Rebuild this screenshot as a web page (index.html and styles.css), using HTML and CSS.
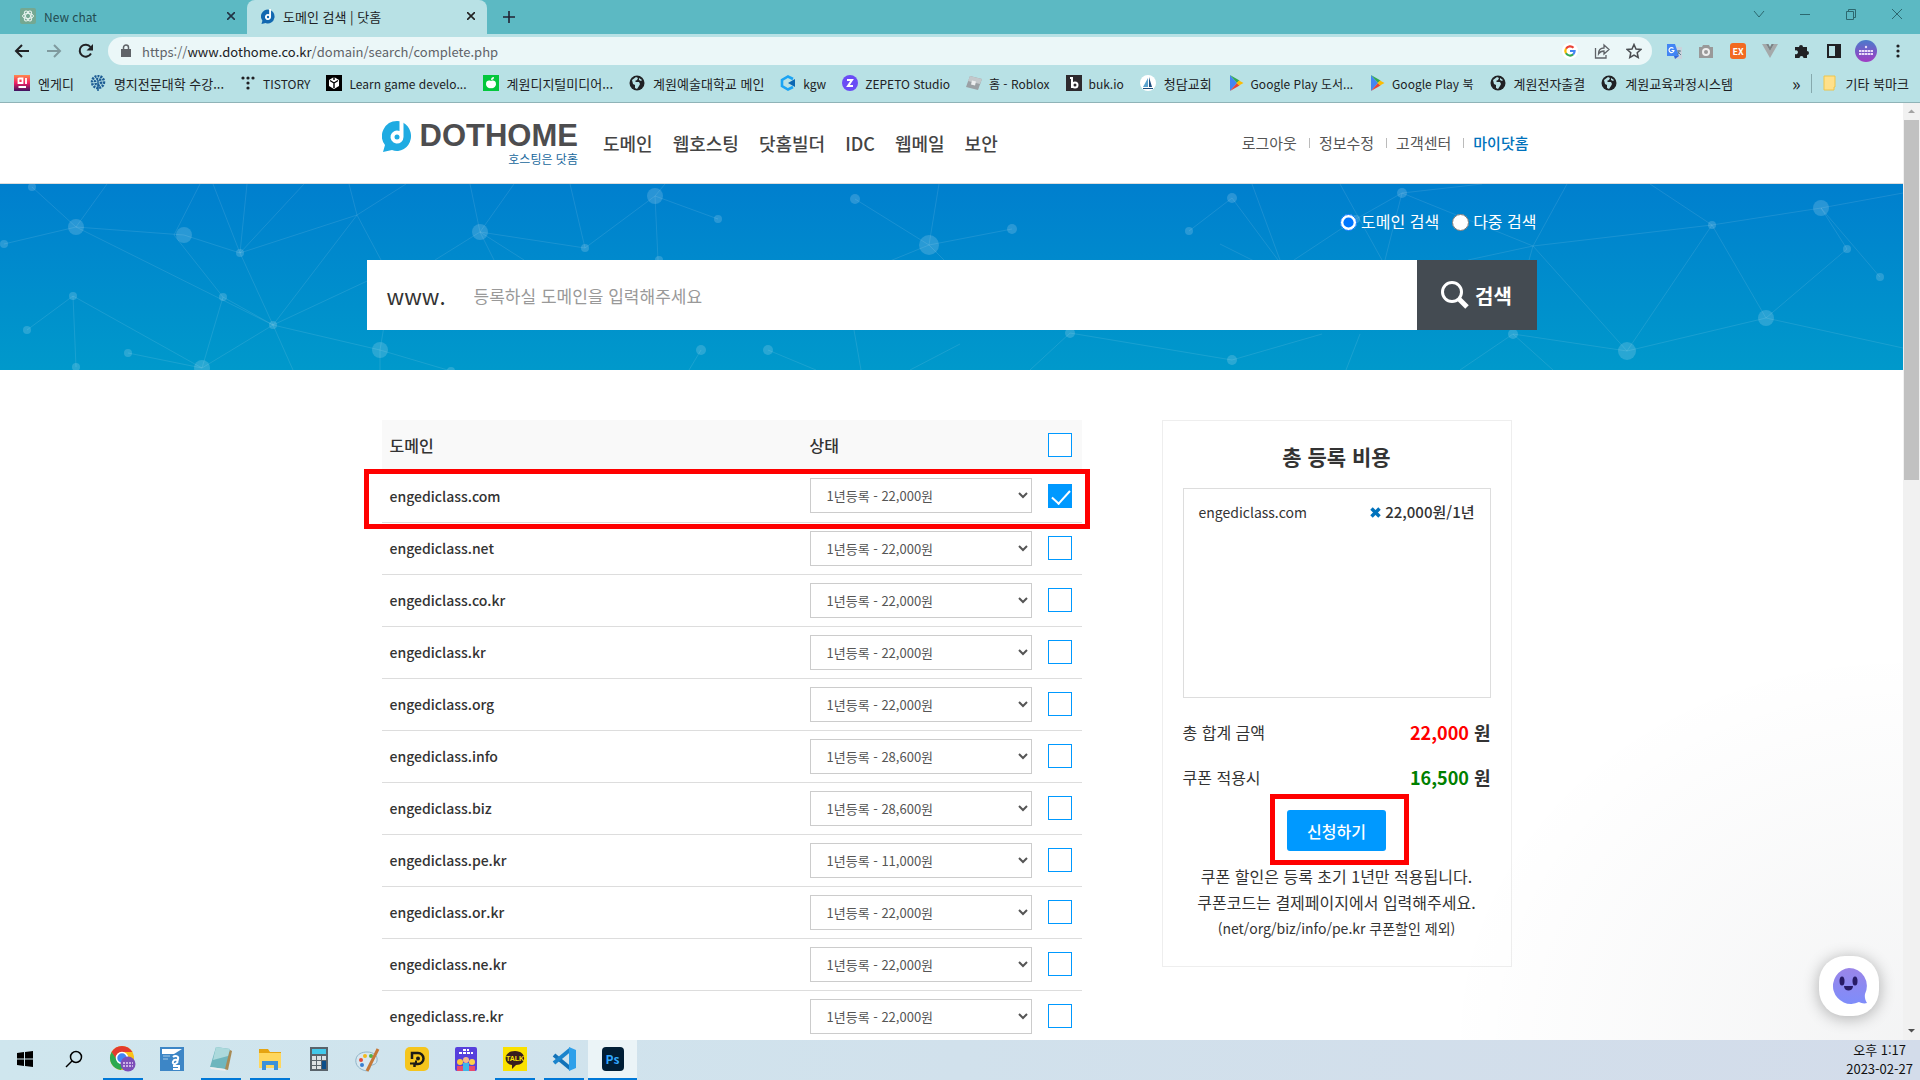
FILE: index.html
```html
<!DOCTYPE html>
<html lang="ko">
<head>
    <meta charset="utf-8">
    <title>도메인 검색 | 닷홈</title>
    <link rel="stylesheet" href="styles.css">
</head>
<body>
    <svg class="sprite" width="0" height="0">
        <symbol id="globe" viewBox="0 0 16 16">
            <circle cx="8" cy="8" r="7.500" fill="#202124"/>
            <path d="M3 5l4-3 2 1-1 2-2 1 1 1h3l1 2-1 2-2 3-2-1V10L4 9z" fill="#b8e1e5"/>
            <path d="M10 3l3 2-1 1-2-1z" fill="#b8e1e5"/>
        </symbol>
        <symbol id="play" viewBox="0 0 16 16">
            <path d="M2 0v16l7-8z" fill="#4285f4"/>
            <path d="M2 0l9.500 5.500L9 8z" fill="#34a853"/>
            <path d="M2 16l9.500-5.500L9 8z" fill="#ea4335"/>
            <path d="M11 5.500L15.500 8 11 10.500 8.500 8z" fill="#fbbc04"/>
        </symbol>
        <symbol id="dot-logo" viewBox="0 0 30 32">
            <path d="M15 1a14 15 0 1 1-5 29L1 32l2-7A15 15 0 0 1 15 1z" fill="currentColor"/>
            <path d="M17.500 0h4v17a6.500 6.500 0 1 1-4-6z" fill="#fff"/>
            <circle cx="15" cy="17" r="2.500" fill="currentColor"/>
        </symbol>
    </svg>

    <!-- browser window -->
    <div class="tabs">
        <div class="tab">
            <svg width="16" height="16" viewBox="0 0 16 16"><rect width="16" height="16" rx="2" fill="#74a892"/><g fill="none" stroke="#e8f4ef"><ellipse cx="8" cy="8" rx="5.500" ry="2.500"/><ellipse cx="8" cy="8" rx="5.500" ry="2.500" transform="rotate(60 8 8)"/><ellipse cx="8" cy="8" rx="5.500" ry="2.500" transform="rotate(120 8 8)"/></g></svg>
            <span class="en">New chat</span>
            <button aria-label="탭 닫기"><svg width="8" height="8" viewBox="0 0 8 8"><path d="M0 0l8 8M8 0L0 8" stroke="#234" stroke-width="1.600"/></svg></button>
        </div>
        <div class="tab active">
            <svg class="tab-logo" width="14" height="15"><use href="#dot-logo"/></svg>
            <span>도메인 검색 | 닷홈</span>
            <button aria-label="탭 닫기"><svg width="8" height="8" viewBox="0 0 8 8"><path d="M0 0l8 8M8 0L0 8" stroke="#222" stroke-width="1.600"/></svg></button>
        </div>
        <button class="new-tab" aria-label="새 탭"><svg width="12" height="12" viewBox="0 0 12 12"><path d="M6 0v12M0 6h12" stroke="#223" stroke-width="1.600"/></svg></button>
        <div class="window-buttons">
            <button aria-label="탭 검색"><svg width="12" height="12" viewBox="0 0 12 12"><path d="M1 3l5 6 5-6"/></svg></button>
            <button aria-label="최소화"><svg width="12" height="12" viewBox="0 0 12 12"><path d="M1 6.500h10"/></svg></button>
            <button aria-label="이전 크기로"><svg width="12" height="12" viewBox="0 0 12 12"><path d="M1.500 3.500h7v8h-7zM3.500 3.500v-2h7v8h-2"/></svg></button>
            <button aria-label="닫기"><svg width="12" height="12" viewBox="0 0 12 12"><path d="M1 1l10 10M11 1L1 11"/></svg></button>
        </div>
    </div>

    <div class="toolbar">
        <div class="nav-buttons">
            <button aria-label="뒤로"><svg width="16" height="16" viewBox="0 0 16 16"><path d="M15 8H2M8 2L2 8l6 6" fill="none" stroke="#202124" stroke-width="2"/></svg></button>
            <button aria-label="앞으로"><svg width="16" height="16" viewBox="0 0 16 16"><path d="M1 8h13M8 2l6 6-6 6" fill="none" stroke="#7f9a9e" stroke-width="2"/></svg></button>
            <button aria-label="새로고침"><svg width="16" height="16" viewBox="0 0 16 16"><path d="M13 10.500A6 6 0 1 1 12.500 4" fill="none" stroke="#202124" stroke-width="2"/><path d="M15 1v6.500H8.500z" fill="#202124"/></svg></button>
        </div>
        <div class="address">
            <svg width="10" height="14" viewBox="0 0 10 14"><path d="M0 5h10v8H0z" fill="#5f6368"/><path d="M2.500 6V3.500a2.500 2.500 0 0 1 5 0V6" fill="none" stroke="#5f6368" stroke-width="1.500"/></svg>
            <p>https://<b>www.dothome.co.kr</b>/domain/search/complete.php</p>
            <button aria-label="Google"><svg width="16" height="16" viewBox="0 0 16 16"><circle cx="8" cy="8" r="8" fill="#fff"/><g fill="none" stroke-width="2.200"><path d="M11.500 4.800A4.700 4.700 0 0 0 4 5.700" stroke="#ea4335"/><path d="M4 5.600a4.700 4.700 0 0 0 0 4.800" stroke="#fbbc04"/><path d="M4 10.300a4.700 4.700 0 0 0 7.200 1" stroke="#34a853"/><path d="M8 8h4.600a4.700 4.700 0 0 1-1.500 3.400" stroke="#4285f4"/></g></svg></button>
            <button aria-label="공유"><svg width="16" height="16" viewBox="0 0 16 16"><path d="M1.500 5v10H12v-3M4.500 11c0-4 2.500-6 5.500-6V2l5 4.500-5 4.500V8c-2.500 0-4 .500-5.500 3z" fill="none" stroke="#5f6368" stroke-width="1.300"/></svg></button>
            <button aria-label="북마크"><svg width="16" height="16" viewBox="0 0 16 16"><path d="M8 1.500l2 4.500 4.800.500-3.600 3.200 1 4.800L8 12l-4.200 2.500 1-4.800L1.200 6.500 6 6z" fill="none" stroke="#4a4d51" stroke-width="1.500"/></svg></button>
        </div>
        <div class="extensions">
            <button aria-label="번역"><svg width="17" height="17" viewBox="0 0 17 17"><path d="M6 4h10v12H9z" fill="#c9d3dc"/><path d="M1 1h8l4 12H1z" fill="#4285f4"/><path d="M9 16l4-3H8z" fill="#3367d6"/><path d="M7.500 5.500a2.500 2.500 0 1 0 .500 2H5.500" fill="none" stroke="#fff" stroke-width="1.200"/><path d="M11 8h4M13 7v1c0 2-1 3-2 4M12 9l3 3" fill="none" stroke="#607d8b"/></svg></button>
            <button aria-label="캡처"><svg width="16" height="16" viewBox="0 0 16 16"><path d="M1 4h3l1-2h6l1 2h3v11H1z" fill="#999"/><circle cx="8" cy="9" r="3" fill="#999" stroke="#eee" stroke-width="2"/></svg></button>
            <button class="ex" aria-label="EX">EX</button>
            <button aria-label="Vue"><svg width="16" height="14" viewBox="0 0 16 14"><path d="M0 0h4l4 7 4-7h4L8 14z" fill="#a5a9aa"/><path d="M4 0h2.500L8 3l1.500-3H12L8 7z" fill="#7d8284"/></svg></button>
            <button aria-label="확장 프로그램"><svg width="16" height="16" viewBox="0 0 16 16"><path d="M1 4h4a2 2 0 1 1 4 0h4v4a2 2 0 1 1 0 4v3H9.500a2 2 0 1 0-4 0H1v-4a2 2 0 1 0 0-3.500z" fill="#202124"/></svg></button>
            <button aria-label="측면 패널"><svg width="16" height="16" viewBox="0 0 16 16"><path d="M2 2h12v12H2z" fill="none" stroke="#202124" stroke-width="2"/><path d="M9 2h5v12H9z" fill="#202124"/></svg></button>
            <button class="avatar" aria-label="프로필"><svg width="22" height="22" viewBox="0 0 22 22"><defs><linearGradient id="av" x2="0" y2="1"><stop offset="0" stop-color="#4a7bcb"/><stop offset="1" stop-color="#a13cc4"/></linearGradient></defs><circle cx="11" cy="11" r="11" fill="url(#av)"/><circle cx="11" cy="7" r="1.200" fill="#e9dcf8"/><path d="M4 11h14M4 14h14" stroke="#e9dcf8" stroke-width="2" stroke-dasharray="2.500 .500"/></svg></button>
            <button aria-label="메뉴"><svg width="4" height="16" viewBox="0 0 4 16"><g fill="#202124"><circle cx="2" cy="3" r="1.600"/><circle cx="2" cy="8" r="1.600"/><circle cx="2" cy="13" r="1.600"/></g></svg></button>
        </div>
    </div>

    <nav class="bookmarks">
        <a href="#"><svg viewBox="0 0 16 16"><defs><linearGradient id="eg" x2="0" y2="1"><stop offset="0" stop-color="#ff8a4c"/><stop offset=".5" stop-color="#f01e63"/><stop offset="1" stop-color="#3b1361"/></linearGradient></defs><path d="M0 0h16v16H0z" fill="url(#eg)"/><path d="M4.500 3v5h4V3.500h-4M12 3v6M4.500 12h7.500" fill="none" stroke="#fff" stroke-width="1.800"/></svg>엔게디</a>
        <a href="#"><svg viewBox="0 0 16 16"><g fill="none" stroke="#1d5c94" stroke-width="2.500" stroke-dasharray="2 1"><circle cx="8" cy="7" r="6"/><circle cx="8" cy="7" r="3"/></g><path d="M8 5v11" stroke="#1d5c94" stroke-width="1.500"/></svg>명지전문대학 수강...</a>
        <a class="en" href="#"><svg viewBox="0 0 16 16"><g fill="#202124"><circle cx="3" cy="3" r="1.600"/><circle cx="8" cy="3" r="1.600"/><circle cx="13" cy="3" r="1.600"/><circle cx="8" cy="8" r="1.600"/><circle cx="8" cy="13" r="1.600"/></g></svg>TISTORY</a>
        <a class="en" href="#"><svg viewBox="0 0 16 16"><path d="M0 0h16v16H0z"/><path d="M8 2l5 3v6l-5 3-5-3V5z" fill="#fff"/><path d="M8 8v5M8 8l4-2.500M8 8L4 5.500M8 2v3" stroke="#000" stroke-width="1.400"/></svg>Learn game develo...</a>
        <a href="#"><svg viewBox="0 0 16 16"><path d="M0 0h16v16H0z" fill="#03c73c"/><path d="M8 6c2-1 5-.500 5 3 0 2-2 5-5 4-3 1-5-2-5-4 0-3.500 3-4 5-3z" fill="#fff"/><path d="M8 5c0-2 1-3 3-3 0 2-1 3-3 3z" fill="#fff"/></svg>계원디지털미디어...</a>
        <a href="#"><svg><use href="#globe"/></svg>계원예술대학교 메인</a>
        <a class="en" href="#"><svg viewBox="0 0 16 16"><path d="M13 4L8 1.500 2 5v6l6 3.500 5-2.500" fill="none" stroke="#1ba4f4" stroke-width="2.600"/><path d="M15 4v8L8 8z" fill="#0b67b2"/></svg>kgw</a>
        <a class="en" href="#"><svg viewBox="0 0 16 16"><circle cx="8" cy="8" r="8" fill="#6a4cf5"/><path d="M5 5h5l-4 6h5" fill="none" stroke="#fff" stroke-width="2"/></svg>ZEPETO Studio</a>
        <a class="en" href="#"><svg viewBox="0 0 16 16"><path d="M4 1l12 3-4 11L0 12z" fill="#9aa0a4"/><path d="M4 1l12 3-2 5L2 6z" fill="#c3c8cb"/><path d="M6 5.500l4 1-1 4-4-1z" fill="#eceeef"/></svg>홈 - Roblox</a>
        <a class="en" href="#"><svg viewBox="0 0 16 16"><path d="M0 0h16v16H0z" fill="#2d2a2e"/><path d="M4 3h2v10" fill="none" stroke="#fff" stroke-width="2"/><circle cx="9" cy="10" r="2.500" fill="none" stroke="#fff" stroke-width="2"/></svg>buk.io</a>
        <a href="#"><svg viewBox="0 0 16 16"><circle cx="8" cy="8" r="8" fill="#fff"/><path d="M8 3v9H3z" fill="#5ba3cf"/><path d="M9 2l3 10H9zM3 13h10v1H3z" fill="#1c4e80"/></svg>청담교회</a>
        <a class="en" href="#"><svg><use href="#play"/></svg>Google Play 도서...</a>
        <a class="en" href="#"><svg><use href="#play"/></svg>Google Play 북</a>
        <a href="#"><svg><use href="#globe"/></svg>계원전자출결</a>
        <a href="#"><svg><use href="#globe"/></svg>계원교육과정시스템</a>
        <button class="more" aria-label="더보기">»</button>
        <a class="other" href="#"><svg viewBox="0 0 16 16"><path d="M2 1h11v11h-1v3H2z" fill="#ffe08a" stroke="#eec54a"/></svg>기타 북마크</a>
    </nav>

    <!-- page -->
    <div class="viewport">
        <div class="page">
            <header class="header">
                <div class="wrap">
                    <a class="logo" href="#">
                        <svg width="30" height="32"><use href="#dot-logo"/></svg>
                        <span class="logo-text">DOTHOME<small>호스팅은 닷홈</small></span>
                    </a>
                    <nav class="menu">
                        <a href="#">도메인</a>
                        <a href="#">웹호스팅</a>
                        <a href="#">닷홈빌더</a>
                        <a href="#">IDC</a>
                        <a href="#">웹메일</a>
                        <a href="#">보안</a>
                    </nav>
                    <nav class="user-menu">
                        <a href="#">로그아웃</a>
                        <a href="#">정보수정</a>
                        <a href="#">고객센터</a>
                        <a class="my" href="#">마이닷홈</a>
                    </nav>
                </div>
            </header>

            <section class="banner">
                <svg class="network" viewBox="0 0 1903 186" preserveAspectRatio="xMidYMid slice">
                    <g fill="none" stroke="#fff" stroke-opacity=".1">
                        <path d="M32 3L76 43 4 60M107 0L76 43l108 8 56 18 117-38 49-31M76 43l197 98M200 0l-26 51 49 62 50 28 107 25 71 21M213 0l27 69 7-69M240 69L304 0M240 69l33 72 84-110-8-31M357 31l32 60M273 141l107-50M73 112l-46 34M73 112l3 71M73 112l129 72 21-71M128 169l74 15 71-43 20 45M380 166v20M380 166l5-30"/>
                        <path d="M470 0l10 48 34-48M480 48l105 16 70-52 3 64M655 12l63 23M655 12l10-12M570 0l15 64M480 48l-45 28M480 48l14 28M480 48l44 28M855 15l74 46 83-16M929 61l10-61M929 61l-44 18M929 61l18 18M701 166l-12 20M768 166l48 20M854 146l7 40M960 160l-50 26"/>
                        <path d="M1189 47l43-33 46 62M1252 0l28 76M1340 0l42 76M1402 9l-46 26-62 41M1402 9l-17 67M1402 9l131 53 34-62M1402 9l80-9M1220 60l60 30M1533 62l-65 14M1533 62l-4 14M1533 62l179-21 109-17 59 69M1712 41l54 93-139 33-114-17-53 36M1766 134l81-69M1821 24l26 41M1766 134l137 30M1627 167l-94-105M1712 41l-85 126M1070 149l162 27 90-26M1070 149l-40 37M1360 150l-14 36M1513 150l40 36M1650 0l62 41M1821 24l82-15"/>
                    </g>
                    <g fill="#fff" fill-opacity=".16">
                        <circle cx="32" cy="3" r="4"/><circle cx="76" cy="43" r="8"/><circle cx="4" cy="60" r="4"/><circle cx="184" cy="51" r="8"/><circle cx="240" cy="69" r="4"/><circle cx="223" cy="113" r="4"/><circle cx="273" cy="141" r="4"/><circle cx="73" cy="112" r="4"/><circle cx="27" cy="146" r="4"/><circle cx="128" cy="169" r="4"/><circle cx="76" cy="183" r="4"/><circle cx="202" cy="184" r="8"/><circle cx="380" cy="166" r="8"/><circle cx="451" cy="187" r="4"/>
                        <circle cx="480" cy="48" r="8"/><circle cx="585" cy="64" r="4"/><circle cx="655" cy="12" r="8"/><circle cx="718" cy="35" r="4"/><circle cx="659" cy="76" r="4"/><circle cx="855" cy="15" r="5"/><circle cx="929" cy="61" r="10"/><circle cx="701" cy="166" r="5"/><circle cx="768" cy="166" r="5"/><circle cx="1012" cy="45" r="5"/><circle cx="1070" cy="149" r="5"/><circle cx="1232" cy="176" r="5"/>
                        <circle cx="1189" cy="47" r="4"/><circle cx="1232" cy="14" r="5"/><circle cx="1402" cy="9" r="5"/><circle cx="1356" cy="35" r="4"/><circle cx="1513" cy="150" r="5"/><circle cx="1712" cy="41" r="4"/><circle cx="1821" cy="24" r="8"/><circle cx="1847" cy="65" r="4"/><circle cx="1880" cy="93" r="4"/><circle cx="1766" cy="134" r="8"/><circle cx="1627" cy="167" r="9"/>
                    </g>
                </svg>
                <form class="search" action="#">
                    <div class="search-type">
                        <label><input type="radio" name="type" checked> 도메인 검색</label>
                        <label><input type="radio" name="type"> 다중 검색</label>
                    </div>
                    <div class="search-box">
                        <label for="domain">www.</label>
                        <input id="domain" type="text" placeholder="등록하실 도메인을 입력해주세요">
                        <button type="submit"><svg width="28" height="28" viewBox="0 0 28 28"><circle cx="11" cy="11" r="9.500" fill="none" stroke="#fff" stroke-width="3"/><path d="M18 18l8 8" stroke="#fff" stroke-width="5"/></svg>검색</button>
                    </div>
                </form>
            </section>

            <main class="wrap content">
                <table class="domains">
                    <thead>
                        <tr><th>도메인</th><th class="state">상태</th><th class="check"><input type="checkbox" aria-label="전체 선택"></th></tr>
                    </thead>
                    <tbody>
                        <tr class="marked"><td>engediclass.com</td><td><select aria-label="engediclass.com"><option>1년등록 - 22,000원</option></select></td><td><input type="checkbox" aria-label="engediclass.com 선택" checked></td></tr>
                        <tr><td>engediclass.net</td><td><select aria-label="engediclass.net"><option>1년등록 - 22,000원</option></select></td><td><input type="checkbox" aria-label="engediclass.net 선택"></td></tr>
                        <tr><td>engediclass.co.kr</td><td><select aria-label="engediclass.co.kr"><option>1년등록 - 22,000원</option></select></td><td><input type="checkbox" aria-label="engediclass.co.kr 선택"></td></tr>
                        <tr><td>engediclass.kr</td><td><select aria-label="engediclass.kr"><option>1년등록 - 22,000원</option></select></td><td><input type="checkbox" aria-label="engediclass.kr 선택"></td></tr>
                        <tr><td>engediclass.org</td><td><select aria-label="engediclass.org"><option>1년등록 - 22,000원</option></select></td><td><input type="checkbox" aria-label="engediclass.org 선택"></td></tr>
                        <tr><td>engediclass.info</td><td><select aria-label="engediclass.info"><option>1년등록 - 28,600원</option></select></td><td><input type="checkbox" aria-label="engediclass.info 선택"></td></tr>
                        <tr><td>engediclass.biz</td><td><select aria-label="engediclass.biz"><option>1년등록 - 28,600원</option></select></td><td><input type="checkbox" aria-label="engediclass.biz 선택"></td></tr>
                        <tr><td>engediclass.pe.kr</td><td><select aria-label="engediclass.pe.kr"><option>1년등록 - 11,000원</option></select></td><td><input type="checkbox" aria-label="engediclass.pe.kr 선택"></td></tr>
                        <tr><td>engediclass.or.kr</td><td><select aria-label="engediclass.or.kr"><option>1년등록 - 22,000원</option></select></td><td><input type="checkbox" aria-label="engediclass.or.kr 선택"></td></tr>
                        <tr><td>engediclass.ne.kr</td><td><select aria-label="engediclass.ne.kr"><option>1년등록 - 22,000원</option></select></td><td><input type="checkbox" aria-label="engediclass.ne.kr 선택"></td></tr>
                        <tr><td>engediclass.re.kr</td><td><select aria-label="engediclass.re.kr"><option>1년등록 - 22,000원</option></select></td><td><input type="checkbox" aria-label="engediclass.re.kr 선택"></td></tr>
                    </tbody>
                </table>

                <aside class="cost">
                    <h2>총 등록 비용</h2>
                    <ul class="cart">
                        <li>
                            <span>engediclass.com</span>
                            <button aria-label="삭제"><svg width="11" height="11" viewBox="0 0 11 11"><path d="M1.500 1.500l8 8M9.500 1.500l-8 8" stroke="#0072bc" stroke-width="3.500"/></svg></button>
                            <strong>22,000원/1년</strong>
                        </li>
                    </ul>
                    <dl>
                        <dt>총 합계 금액</dt>
                        <dd><span class="total">22,000</span> 원</dd>
                        <dt>쿠폰 적용시</dt>
                        <dd><span class="coupon">16,500</span> 원</dd>
                    </dl>
                    <div class="apply"><button>신청하기</button></div>
                    <p>쿠폰 할인은 등록 초기 1년만 적용됩니다.<br>쿠폰코드는 결제페이지에서 입력해주세요.</p>
                    <p class="except">(net/org/biz/info/pe.kr 쿠폰할인 제외)</p>
                </aside>
            </main>

            <div class="chat-shade"></div>
            <button class="chat" aria-label="채팅 상담"><svg width="38" height="38" viewBox="0 0 38 38"><defs><linearGradient id="bot" x2="0" y2="1"><stop offset="0" stop-color="#9a85e8"/><stop offset="1" stop-color="#7e8dfa"/></linearGradient></defs><path d="M19 1a18 18 0 0 1 16 26c-.500 3 0 6 2 9-3 1-6 0-8-1A18 18 0 1 1 19 1z" fill="url(#bot)"/><g fill="#281b66"><ellipse cx="12" cy="14" rx="2.500" ry="4.500"/><ellipse cx="25" cy="14" rx="2.500" ry="4.500"/><path d="M14 19h9c0 6-9 6-9 0z"/></g></svg></button>
        </div>
        <div class="scrollbar">
            <svg width="17" height="17" viewBox="0 0 17 17"><path d="M5 10h7L8.500 6.500z" fill="#a3a3a3"/></svg>
            <div class="thumb"></div>
            <svg width="17" height="17" viewBox="0 0 17 17"><path d="M5 6h7L8.500 9.500z" fill="#505050"/></svg>
        </div>
    </div>

    <!-- windows taskbar -->
    <footer class="taskbar">
        <button aria-label="시작"><svg width="16" height="16" viewBox="0 0 16 16"><path d="M0 2l7-1v6.500H0zM8 1l8-1v7.500H8zM0 8.500h7V15l-7-1zM8 8.500h8V16l-8-1z"/></svg></button>
        <button aria-label="검색"><svg width="18" height="18" viewBox="0 0 18 18"><circle cx="11" cy="7" r="5.500" fill="none" stroke="#000" stroke-width="1.500"/><path d="M7 11l-6 6" stroke="#000" stroke-width="1.500"/></svg></button>
        <button class="open" aria-label="Chrome"><svg width="28" height="28" viewBox="0 0 28 28"><circle cx="13" cy="13" r="12" fill="#fbc116"/><path d="M2.600 7A12 12 0 0 1 23.400 7H13a6 6 0 0 0-5.500 8.500z" fill="#e33b2e"/><path d="M2.600 7a12 12 0 0 0 9.400 18l4-8a5 5 0 0 1-8-2z" fill="#2da94f"/><circle cx="13" cy="13" r="5.500" fill="#4285f4" stroke="#fff" stroke-width="1.500"/><circle cx="19" cy="19" r="7.500" fill="#7c4fb8"/><path d="M14 18h10M14 21h10" stroke="#e2d3f5" stroke-width="1.500" stroke-dasharray="2 1"/></svg></button>
        <button aria-label="문서"><svg width="24" height="24" viewBox="0 0 24 24"><path d="M0 0h24v24H0z" fill="#3d86c6"/><path d="M2 2h20l-8 5H2z" fill="#fff"/><path d="M3 9h7M3 12h5" stroke="#a9cdea"/><path d="M13 10c2-2 6-1 5 2l-1 4M17 13c-4-1-6 4-2 4l3-2M13 22h6v-3h-6" fill="none" stroke="#fff" stroke-width="2"/></svg></button>
        <button class="open" aria-label="메모장"><svg width="24" height="26" viewBox="0 0 24 26"><path d="M19 3l4 2-4 19-4-1z" fill="#a88a54"/><path d="M7 1l14 2-5 20-15-2z" fill="#6fb6bd"/><path d="M7 1l14 2-2 7L4 14z" fill="#acd9dc"/><path d="M1 21l15 2 1 2-15-2z" fill="#eee"/></svg></button>
        <button class="open" aria-label="탐색기"><svg width="24" height="22" viewBox="0 0 24 22"><path d="M1 1h9l2 3h11v6H1z" fill="#e5a412"/><path d="M1 5h22v15H1z" fill="#ffd75e"/><path d="M4 22v-9h16v9h-4v-5H8v5z" fill="#3d91d8"/></svg></button>
        <button aria-label="계산기"><svg width="18" height="24" viewBox="0 0 18 24"><path d="M0 0h18v24H0z" fill="#59636b"/><path d="M2 2h14v5H2z" fill="#43c8ea"/><path d="M2 9h4v4H2zM7 9h4v4H7zM12 9h4v4h-4zM2 14h4v4H2zM7 14h4v4H7zM2 19h4v3H2zM7 19h4v3H7z" fill="#dce1e4"/><path d="M12 14h4v8h-4z" fill="#0b4e8a"/></svg></button>
        <button aria-label="그림판"><svg width="25" height="25" viewBox="0 0 25 25"><path d="M12 5c7 0 11 4 10 9s-7 3-7 6-2 5-7 3-8-6-7-11 6-7 11-7z" fill="#d7e7f0" stroke="#90b4c7"/><circle cx="6" cy="13" r="2" fill="#e44c3a"/><circle cx="10" cy="9" r="2" fill="#f2b91f"/><circle cx="16" cy="9" r="2" fill="#57af44"/><circle cx="7" cy="18" r="2" fill="#397ed0"/><path d="M23 2L12 24" stroke="#c57837" stroke-width="3"/></svg></button>
        <button aria-label="플레이어"><svg width="24" height="24" viewBox="0 0 24 24"><rect width="24" height="24" rx="5" fill="#f5c51d"/><path d="M7 12V6h6a5.500 5.500 0 0 1 0 11H9.500v3" fill="none" stroke="#1d1b16" stroke-width="2.500"/><path d="M5 16.500h6v-3" fill="none" stroke="#1d1b16" stroke-width="2"/><circle cx="13" cy="11.500" r="2" fill="#1d1b16"/></svg></button>
        <button aria-label="ZEP"><svg width="22" height="24" viewBox="0 0 22 24"><rect width="22" height="24" rx="2" fill="#5740dc"/><path d="M4 6h14M8 3h6" stroke="#fff" stroke-width="2" stroke-dasharray="3 1"/><circle cx="5" cy="15" r="3" fill="#ffc83d"/><circle cx="11" cy="13" r="3" fill="#f6b68c"/><circle cx="17" cy="15" r="3" fill="#ffd14a"/><path d="M2 24v-5h6v5zM14 24v-5h6v5z" fill="#e84a6d"/><path d="M8 24v-8h6v8z" fill="#3fb7e8"/></svg></button>
        <button class="open" aria-label="카카오톡"><svg width="24" height="24" viewBox="0 0 24 24"><path d="M0 0h24v24H0z" fill="#fae100"/><path d="M12 4c12 0 12 14 1 14l-4 4v-4C0 17 0 4 12 4z" fill="#371d1e"/><text x="12" y="14" text-anchor="middle">TALK</text></svg></button>
        <button class="open" aria-label="VS Code"><svg width="24" height="24" viewBox="0 0 24 24"><path d="M2 8l17 14" stroke="#1272b8" stroke-width="4"/><path d="M2 16L19 2" stroke="#1b84cc" stroke-width="4"/><path d="M17 0l7 3v18l-7 3z" fill="#2fa0ea"/></svg></button>
        <button class="open current" aria-label="Photoshop"><span>Ps</span></button>
        <div class="clock">
            <span>오후 1:17</span>
            <span>2023-02-27</span>
        </div>
    </footer>
</body>
</html>
```

FILE: styles.css
```css
* {
    box-sizing: border-box;
}

body {
    display: flex;
    flex-direction: column;
    height: 100vh;
    margin: 0;
    overflow: hidden;
    font-family: "Noto Sans CJK KR", sans-serif;
    font-size: 15px;
    color: #333;
    background-color: #fff;
}

a {
    color: inherit;
    text-decoration: none;
}

button {
    display: flex;
    align-items: center;
    justify-content: center;
    padding: 0;
    border: none;
    background: none;
    font: inherit;
    color: inherit;
}

.sprite {
    position: absolute;
}

/* browser */
.tabs {
    display: flex;
    flex: none;
    height: 34px;
    background-color: #5cb9c3;
    font-size: 13px;
}

.tab {
    display: flex;
    align-items: center;
    gap: 8px;
    width: 240px;
    padding: 0 12px 2px 14px;
    color: #234a50;
}

.tab:first-child {
    width: 247px;
    padding-left: 20px;
}

.tab span {
    flex: 1;
}

.en {
    font-size: 12px;
}

.tab.active {
    background-color: #b8e1e5;
    border-radius: 8px 8px 0 0;
    color: #202124;
}

.tab-logo {
    color: #1268b0;
}

.new-tab {
    width: 44px;
}

.window-buttons {
    display: flex;
    margin-left: auto;
    height: 28px;
}

.window-buttons button {
    width: 46px;
}

.window-buttons path {
    fill: none;
    stroke: #2c686f;
}

.toolbar {
    display: flex;
    flex: none;
    align-items: center;
    height: 34px;
    padding: 0 6px;
    background-color: #b8e1e5;
}

.nav-buttons, .extensions {
    display: flex;
    align-items: center;
}

.toolbar button {
    width: 32px;
}

.address {
    display: flex;
    flex: 1;
    align-items: center;
    height: 28px;
    margin: 0 6px;
    padding: 0 2px 0 13px;
    border-radius: 14px;
    background-color: #ebf7f8;
    font-size: 13px;
    color: #5f6368;
}

.address p {
    flex: 1;
    margin: 0 11px;
}

.address b {
    font-weight: normal;
    color: #202124;
}

.toolbar .ex {
    width: 16px;
    height: 16px;
    margin: 0 8px;
    border-radius: 3px;
    background-color: #f26a21;
    font-size: 9px;
    font-weight: bold;
    color: #fff;
}

.bookmarks {
    display: flex;
    flex: none;
    align-items: center;
    gap: 16px;
    height: 35px;
    padding: 0 11px 4px 14px;
    border-bottom: 1px solid #8fb3b7;
    background-color: #b8e1e5;
    font-size: 13px;
    white-space: nowrap;
    color: #202124;
}

.bookmarks a {
    display: flex;
    align-items: center;
    gap: 8px;
}

.bookmarks .en {
    gap: 7px;
}

.bookmarks svg {
    width: 16px;
    height: 16px;
}

.bookmarks .more {
    margin-left: auto;
    margin-right: -6px;
    font-size: 18px;
}

.bookmarks .other {
    padding-left: 10px;
    border-left: 1px solid #86a9ad;
}

/* page */
.viewport {
    display: flex;
    flex: 1;
    min-height: 0;
}

.page {
    position: relative;
    flex: 1;
    overflow: hidden;
}

.scrollbar {
    display: flex;
    flex-direction: column;
    width: 17px;
    background-color: #f1f1f1;
}

.scrollbar .thumb {
    height: 360px;
    margin: 0 1px auto;
    background-color: #c1c1c1;
}

.wrap {
    display: flex;
    width: 1140px;
    margin: 0 auto;
}

.header {
    border-bottom: 1px solid #ddd;
}

.header .wrap {
    align-items: center;
    height: 80px;
    padding-bottom: 1px;
}

.logo {
    display: flex;
    gap: 8px;
    color: #1fabe2;
}

.logo-text {
    display: flex;
    flex-direction: column;
    font: bold 31px/32px "Liberation Sans", sans-serif;
    color: #4d4d4f;
}

.logo-text small {
    align-self: flex-end;
    font: 12px/14px "Noto Sans CJK KR", sans-serif;
    color: #17679c;
}

.menu {
    display: flex;
    gap: 20px;
    margin-left: 25px;
    font-size: 18px;
    font-weight: 500;
    color: #444;
}

.user-menu {
    display: flex;
    margin-left: auto;
    margin-right: -7px;
    color: #555;
}

.user-menu a {
    display: flex;
    align-items: center;
}

.user-menu a + a::before {
    content: "";
    height: 10px;
    margin: 0 9px 0 12px;
    border-left: 1px solid #bbb;
}

.user-menu .my {
    font-weight: 500;
    color: #0072bc;
}

.banner {
    position: relative;
    height: 186px;
    background: linear-gradient(#007fce, #0099cb);
}

.network {
    position: absolute;
    width: 100%;
    height: 100%;
}

.search {
    position: relative;
    width: 1170px;
    margin: 0 auto;
    padding-top: 25px;
}

.search-type {
    display: flex;
    justify-content: flex-end;
    gap: 13px;
    height: 51px;
    font-size: 16px;
    line-height: 24px;
    color: #fff;
}

.search-type label {
    display: flex;
    gap: 4px;
}

.search-type input {
    width: 17px;
    height: 17px;
    margin: 5px 0;
}

.search-box {
    display: flex;
    align-items: center;
    height: 70px;
    padding-left: 20px;
    background-color: #fff;
    font-size: 22px;
}

.search-box input {
    flex: 1;
    margin-left: 28px;
    padding: 0;
    border: none;
    outline: none;
    font: 17px "Noto Sans CJK KR", sans-serif;
}

.search-box input::placeholder {
    color: #999;
}

.search-box button {
    gap: 6px;
    width: 120px;
    height: 100%;
    background-color: #444b52;
    font-size: 20px;
    font-weight: bold;
    color: #fff;
}

.content {
    justify-content: space-between;
    align-items: flex-start;
    padding: 50px 10px 0 0;
}

.domains {
    width: 700px;
    border-collapse: collapse;
    table-layout: fixed;
    text-align: left;
}

.domains th {
    height: 50px;
    padding: 0 0 0 8px;
    background-color: #f9f9f9;
    font-size: 16px;
    font-weight: 500;
}

.domains td {
    height: 52px;
    padding: 0 0 0 8px;
    border-bottom: 1px solid #ddd;
    font-size: 14px;
    font-weight: 500;
}

.domains .state {
    width: 238px;
}

.domains .check {
    width: 42px;
}

.domains select {
    display: block;
    width: 222px;
    height: 35px;
    padding: 0 0 0 12px;
    border: 1px solid #ccc;
    border-radius: 0;
    background-color: #fff;
    font: 13px "Noto Sans CJK KR", sans-serif;
    color: #555;
}

.domains input {
    display: block;
    width: 24px;
    height: 24px;
    margin: 0;
    appearance: none;
    border: 1px solid #0099ff;
    background-color: #fff;
}

.domains input:checked {
    background-color: #0099ff;
}

.domains input:checked::before {
    content: "";
    display: block;
    width: 16px;
    height: 8px;
    margin: 5px 3px;
    border-left: 2px solid #fff;
    border-bottom: 2px solid #fff;
    transform: rotate(-48deg);
}

/* red marks round the steps to follow */
.marked, .apply {
    position: relative;
}

.marked td:first-child::after, .apply::after {
    content: "";
    position: absolute;
    border: 5px solid #f00;
}

.marked td:first-child::after {
    inset: -1px -8px -7px -18px;
}

.cost {
    width: 350px;
    height: 547px;
    padding: 20px;
    border: 1px solid #eee;
}

.cost h2 {
    margin: 0;
    font-size: 21px;
    line-height: 30px;
    text-align: center;
}

.cart {
    height: 210px;
    margin: 17px 0 0;
    padding: 11px 15px;
    border: 1px solid #ddd;
    list-style: none;
}

.cart li {
    display: flex;
    align-items: center;
    line-height: 24px;
}

.cart span {
    flex: 1;
    font-size: 14px;
}

.cart strong {
    margin-left: 4px;
    font-weight: 500;
}

.cost dl {
    display: grid;
    grid-template-columns: 1fr auto;
    row-gap: 15px;
    margin: 19px 0 18px;
    font-size: 16px;
    line-height: 30px;
}

.cost dd {
    margin: 0;
    font-size: 18px;
    font-weight: bold;
}

.total {
    color: #f00;
}

.coupon {
    color: #008000;
}

.apply {
    width: 99px;
    margin: 0 auto;
}

.apply button {
    width: 100%;
    height: 41px;
    border-radius: 3px;
    background-color: #0099ff;
    font-size: 16px;
    font-weight: 500;
    color: #fff;
}

.apply::after {
    inset: -16px -23px -14px -17px;
}

.cost p {
    margin: 12px 0 0;
    font-size: 16px;
    line-height: 26px;
    text-align: center;
}

.cost .except {
    margin: 0;
    font-size: 14px;
}

.chat-shade {
    position: absolute;
    right: 0;
    bottom: 0;
    width: 500px;
    height: 426px;
    background: radial-gradient(ellipse at bottom right, rgba(29, 39, 54, 0.05) 0, rgba(29, 39, 54, 0) 65%);
    pointer-events: none;
}

.chat {
    position: absolute;
    right: 24px;
    bottom: 24px;
    width: 60px;
    height: 60px;
    border-radius: 26px;
    background-color: #fff;
    box-shadow: 0 2px 16px rgba(0, 0, 0, 0.3);
}

/* taskbar */
.taskbar {
    display: flex;
    flex: none;
    height: 40px;
    background: linear-gradient(90deg, #cfe6ee, #d3dcea);
}

.taskbar button {
    width: 49px;
    border-bottom: 2px solid transparent;
}

.taskbar .open {
    padding: 0 4px;
    background: linear-gradient(#0078d7, #0078d7) border-box center bottom / 40px 2px no-repeat;
}

.taskbar .current {
    border-bottom-color: #0078d7;
    background: #ebf4f7;
}

.taskbar .current span {
    width: 22px;
    height: 24px;
    border-radius: 4px;
    background-color: #001e36;
    font-size: 12px;
    font-weight: bold;
    line-height: 23px;
    color: #31a8ff;
}

.taskbar text {
    font: bold 7px "Liberation Sans", sans-serif;
    fill: #fae100;
}

.clock {
    display: flex;
    flex-direction: column;
    align-items: center;
    margin-left: auto;
    padding-right: 7px;
    font-size: 13px;
    line-height: 19px;
    color: #111;
}
```
